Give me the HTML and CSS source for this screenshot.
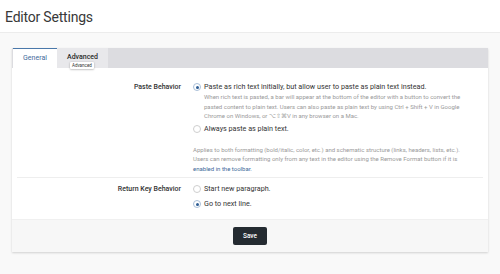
FILE: index.html
```html
<!DOCTYPE html>
<html>
<head>
<meta charset="utf-8">
<link rel="stylesheet" href="styles.css">
</head>
<body>
<header class="page-header"><h1 class="title">Editor Settings</h1></header>
<main class="page">
  <section class="card">
    <nav class="tabs">
      <div class="tab tab-active">General</div>
      <div class="tab tab-inactive">Advanced
        <span class="tooltip">Advanced</span>
      </div>
    </nav>
    <div class="card-body">
      <div class="row row-first">
        <div class="label">Paste Behavior</div>
        <div class="options">
          <div class="option">
            <span class="radio radio-on"></span>
            <div class="option-text">
              <div class="option-title">Paste as rich text initially, but allow user to paste as plain text instead.</div>
              <div class="desc">When rich text is pasted, a bar will appear at the bottom of the editor with a button to convert the<br>pasted content to plain text. Users can also paste as plain text by using Ctrl + Shift + V in Google<br>Chrome on Windows, or ⌥⇧⌘V in any browser on a Mac.</div>
            </div>
          </div>
          <div class="option option-second">
            <span class="radio"></span>
            <div class="option-text"><div class="option-title">Always paste as plain text.</div></div>
          </div>
          <div class="help">Applies to both formatting (bold/italic, color, etc.) and schematic structure (links, headers, lists, etc.).<br>Users can remove formatting only from any text in the editor using the Remove Format button if it is<br><span class="link">enabled in the toolbar.</span></div>
        </div>
      </div>
      <div class="row row-second">
        <div class="label">Return Key Behavior</div>
        <div class="options">
          <div class="option">
            <span class="radio"></span>
            <div class="option-text"><div class="option-title">Start new paragraph.</div></div>
          </div>
          <div class="option option-second2">
            <span class="radio radio-on"></span>
            <div class="option-text"><div class="option-title">Go to next line.</div></div>
          </div>
        </div>
      </div>
    </div>
    <footer class="card-footer"><button class="save">Save</button></footer>
  </section>
</main>
</body>
</html>
```

FILE: styles.css
```css
* { box-sizing: border-box; }
html, body { margin: 0; padding: 0; }
body {
  background: #f9f9f9;
  font-family: Roboto, "Liberation Sans", Arial, sans-serif;
  color: #333;
  width: 500px;
  height: 274px;
  overflow: hidden;
}
.page-header {
  height: 33px;
  background: #fff;
  border-bottom: 1px solid #ececec;
  padding: 8px 0 0 5px;
}
.title {
  margin: 0;
  font-family: Roboto, sans-serif;
  font-size: 14px;
  font-weight: 400;
  line-height: 18px;
  letter-spacing: -0.2px;
  color: #383838;
}
.page { padding: 15px 12px 0 12px; }
.card {
  width: 476px;
  background: #fff;
  box-shadow: 0 1px 2px rgba(0,0,0,0.16);
}
.tabs {
  display: flex;
  height: 20px;
  background: #dcdce0;
  padding-left: 1px;
}
.tab {
  position: relative;
  height: 20px;
  font-size: 7px;
  line-height: 20px;
  text-align: center;
}
.tab-active {
  width: 44px;
  background: #fff;
  color: #3f6b9b;
  border-top: 1px solid #4a78aa;
  line-height: 19px;
}
.tab-inactive {
  width: 51px;
  background: #e8e8eb;
  color: #2a2a2a;
  font-weight: 500;
  line-height: 18px;
}
.tooltip {
  position: absolute;
  left: 13px;
  top: 14px;
  padding: 0 2px;
  font-size: 4.5px;
  line-height: 7px;
  font-weight: 400;
  color: #333;
  background: #fff;
  border-radius: 1px;
  box-shadow: 0 0.5px 2px rgba(0,0,0,0.35);
}
.card-body { padding: 0 5px; }
.row {
  display: grid;
  grid-template-columns: 164px 1fr;
  column-gap: 12px;
}
.row-first {
  padding-top: 14px;
  padding-bottom: 4px;
  border-bottom: 1px solid #eeeeee;
}
.row-second {
  padding-top: 6px;
  padding-bottom: 10px;
}
.label {
  text-align: right;
  font-size: 7px;
  line-height: 10px;
  font-weight: 500;
  color: #333;
}
.option { display: flex; align-items: flex-start; }
.option-second { margin-top: 3px; }
.option-second2 { margin-top: 5px; }
.radio {
  flex: none;
  width: 8px;
  height: 8px;
  margin-top: 1px;
  margin-right: 3px;
  border-radius: 50%;
  border: 0.7px solid #cfcfcf;
  background: #fff;
  position: relative;
}
.radio-on { border-color: #a9bfd8; }
.radio-on::after {
  content: "";
  position: absolute;
  left: 1.8px;
  top: 1.8px;
  width: 3.3px;
  height: 3.3px;
  border-radius: 50%;
  background: #2e5d94;
}
.option-title {
  font-size: 7.2px;
  line-height: 10px;
  color: #333;
  white-space: nowrap;
}
.desc, .help {
  font-size: 6px;
  line-height: 9.5px;
  color: #9a9a9a;
  white-space: nowrap;
}
.help { margin-top: 11px; }
.link { color: #3d6a9a; }
.card-footer {
  height: 33px;
  background: #f7f7f7;
  border-top: 1px solid #f0f0f0;
  display: flex;
  justify-content: center;
  align-items: flex-start;
  padding-top: 7px;
}
.save {
  width: 34px;
  height: 18px;
  border: none;
  border-radius: 2px;
  background: #242b31;
  color: #fff;
  font-family: Roboto, "Liberation Sans", Arial, sans-serif;
  font-size: 6.5px;
  font-weight: 500;
  padding: 0;
}
```
